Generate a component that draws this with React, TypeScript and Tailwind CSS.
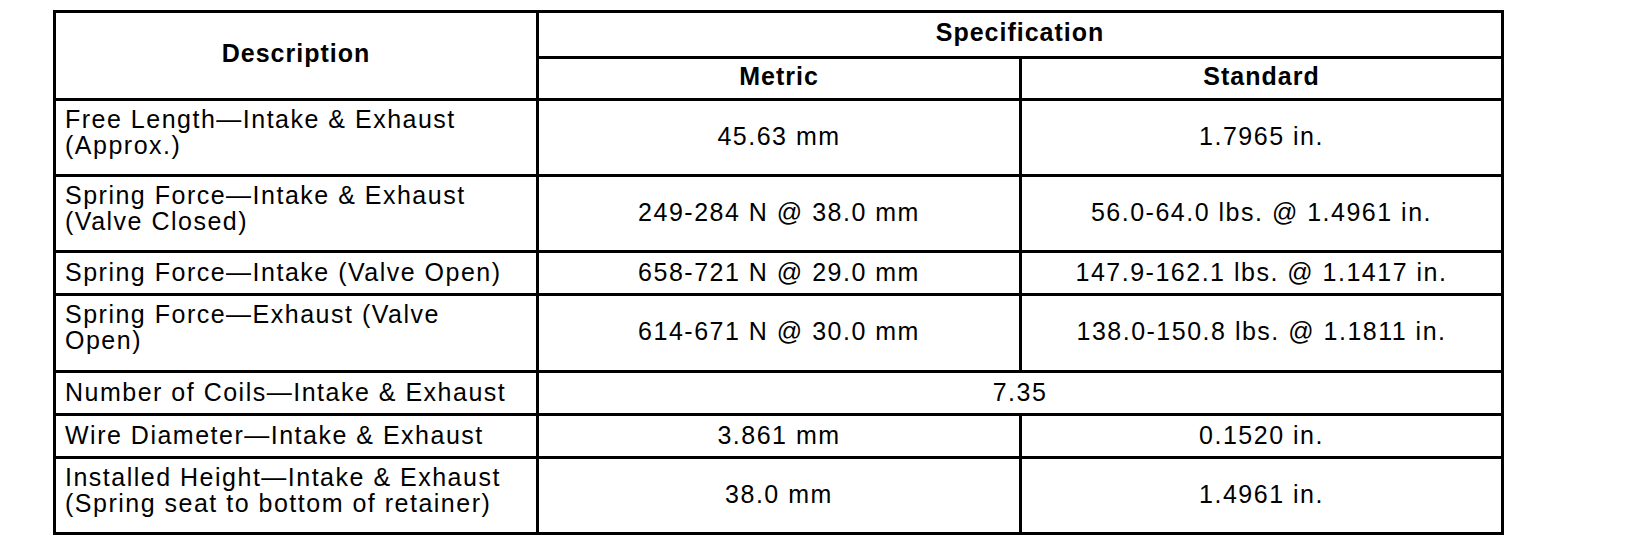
const rows: { desc: string[]; metric: string; standard?: string; tall: boolean }[] = [
  { desc: ["Free Length—Intake & Exhaust", "(Approx.)"], metric: "45.63 mm", standard: "1.7965 in.", tall: true },
  { desc: ["Spring Force—Intake & Exhaust", "(Valve Closed)"], metric: "249-284 N @ 38.0 mm", standard: "56.0-64.0 lbs. @ 1.4961 in.", tall: true },
  { desc: ["Spring Force—Intake (Valve Open)"], metric: "658-721 N @ 29.0 mm", standard: "147.9-162.1 lbs. @ 1.1417 in.", tall: false },
  { desc: ["Spring Force—Exhaust (Valve", "Open)"], metric: "614-671 N @ 30.0 mm", standard: "138.0-150.8 lbs. @ 1.1811 in.", tall: true },
  { desc: ["Number of Coils—Intake & Exhaust"], metric: "7.35", tall: false },
  { desc: ["Wire Diameter—Intake & Exhaust"], metric: "3.861 mm", standard: "0.1520 in.", tall: false },
  { desc: ["Installed Height—Intake & Exhaust", "(Spring seat to bottom of retainer)"], metric: "38.0 mm", standard: "1.4961 in.", tall: true },
];

export default function App() {
  return (
    <div className="w-[1632px] h-[544px] bg-white pt-[10px] pl-[53px] font-['Liberation_Sans',Arial,sans-serif] text-black text-[25px] leading-[26px] tracking-[1.5px]">
      <table className="w-[1448px] border-collapse table-fixed">
        <colgroup>
          <col className="w-[483px]" />
          <col className="w-[483px]" />
          <col className="w-[482px]" />
        </colgroup>
        <thead>
          <tr className="h-[46px]">
            <th rowSpan={2} className="border-[3px] border-black font-bold text-center align-middle pb-[6px] tracking-[1px]">
              Description
            </th>
            <th colSpan={2} className="border-[3px] border-black font-bold text-center align-middle pb-[5px] tracking-[1px]">
              Specification
            </th>
          </tr>
          <tr className="h-[42px]">
            <th className="border-[3px] border-black font-bold text-center align-middle pb-[5px] tracking-[1px]">Metric</th>
            <th className="border-[3px] border-black font-bold text-center align-middle pb-[5px] tracking-[1px]">Standard</th>
          </tr>
        </thead>
        <tbody>
          {rows.map((r, i) => (
            <tr key={i} className={r.tall ? (i === 3 ? "h-[77px]" : "h-[76px]") : "h-[43px]"}>
              <td className={`border-[3px] border-black pl-[9px] pr-[3px] align-middle font-normal ${r.tall ? "pb-[12px]" : "pb-[2px]"}`}>
                {r.desc.map((l, j) => (
                  <div key={j}>{l}</div>
                ))}
              </td>
              {r.standard ? (
                <>
                  <td className={`border-[3px] border-black text-center align-middle ${r.tall ? "pb-[4px]" : "pb-[2px]"}`}>{r.metric}</td>
                  <td className={`border-[3px] border-black text-center align-middle ${r.tall ? "pb-[4px]" : "pb-[2px]"}`}>{r.standard}</td>
                </>
              ) : (
                <td colSpan={2} className="border-[3px] border-black text-center align-middle pb-[2px]">{r.metric}</td>
              )}
            </tr>
          ))}
        </tbody>
      </table>
    </div>
  );
}
